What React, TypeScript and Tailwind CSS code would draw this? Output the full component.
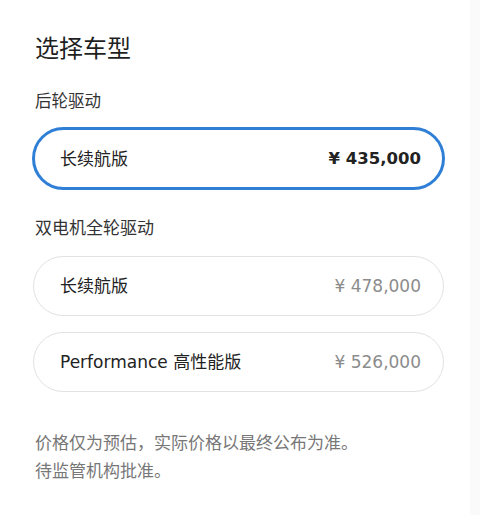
const FONT = 'font-["DejaVu_Sans","Noto_Sans_CJK_SC",sans-serif]'

type Trim = { name: string; price: string; selected?: boolean }

const groups: { label: string; trims: Trim[] }[] = [
  { label: '后轮驱动', trims: [{ name: '长续航版', price: '¥ 435,000', selected: true }] },
  {
    label: '双电机全轮驱动',
    trims: [
      { name: '长续航版', price: '¥ 478,000' },
      { name: 'Performance 高性能版', price: '¥ 526,000' },
    ],
  },
]

function TrimCard({ trim }: { trim: Trim }) {
  if (trim.selected) {
    return (
      <div className="-mx-[1px] flex h-[63px] items-center justify-between rounded-full border-[3px] border-[#2f7fd6] pb-[0px] pl-[25px] pr-[21px] pt-[2px]">
        <span className="text-[17px] text-[#222]">{trim.name}</span>
        <span className="text-[16.5px] font-bold text-[#222]">{trim.price}</span>
      </div>
    )
  }
  return (
    <div className="flex h-[60px] items-center justify-between rounded-full border border-[#e2e2e2] pl-[26px] pr-[22px] pt-[1px]">
      <span className="text-[17px] text-[#222]">{trim.name}</span>
      <span className="text-[17px] text-[#8c8c8c]">{trim.price}</span>
    </div>
  )
}

export default function App() {
  return (
    <div className={`flex h-[515px] w-[480px] bg-white ${FONT}`}>
      <div className="w-[470px] pl-[33px] pr-[26px] pt-[33px]">
        <h1 className="pl-[2px] text-[24px] font-normal leading-[32px] text-[#1f1f1f]">选择车型</h1>

        <p className="mt-[25px] pl-[2px] text-[16.5px] leading-[24px] text-[#333]">{groups[0].label}</p>
        <div className="mt-[13px] flex flex-col gap-4">
          {groups[0].trims.map((t) => (
            <TrimCard key={t.name} trim={t} />
          ))}
        </div>

        <p className="mt-[26px] pl-[2px] text-[17px] leading-[24px] text-[#333]">{groups[1].label}</p>
        <div className="mt-[16px] flex flex-col gap-4">
          {groups[1].trims.map((t) => (
            <TrimCard key={t.name} trim={t} />
          ))}
        </div>

        <div className="mt-[37px] pl-[2px] text-[17px] leading-[28px] text-[#777]">
          <p>价格仅为预估，实际价格以最终公布为准。</p>
          <p>待监管机构批准。</p>
        </div>
      </div>
      <div className="w-[10px] bg-[#fafafa]" />
    </div>
  )
}
